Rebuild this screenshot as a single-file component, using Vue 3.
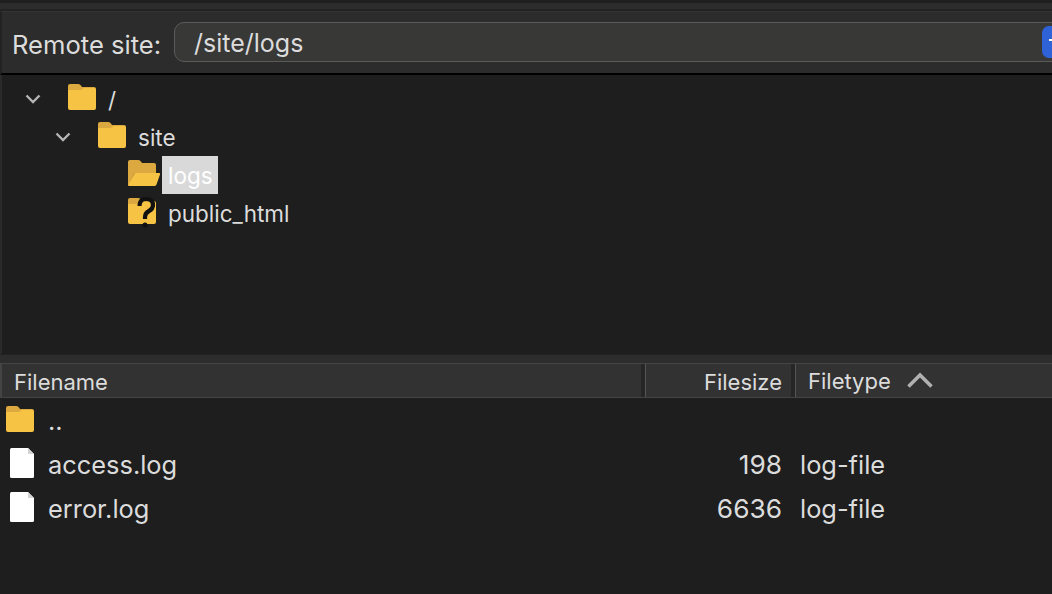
<template>
  <div class="window">
    <div class="top-strip"></div>
    <div class="site-bar">
      <label class="site-label">Remote site:</label>
      <div class="site-input">/site/logs</div>
      <div class="site-btn"><span class="btn-mark"></span></div>
    </div>
    <div class="tree">
      <div
        v-for="node in nodes"
        :key="node.name"
        class="tree-row"
        :class="'level-' + node.level"
      >
        <span class="twisty">
          <svg v-if="node.open" width="16" height="10" viewBox="0 0 16 10">
            <path d="M1.500 1.500 8 8l6.500-6.500" fill="none" stroke="#b4b4b4" stroke-width="2.400" />
          </svg>
        </span>
        <span class="tree-icon">
          <svg v-if="node.icon === 'opened'" width="32" height="26" viewBox="0 0 32 26">
            <path d="M0 2q0-2 2-2h8q1.500 0 2.500 1l1.500 2h12q2 0 2 2v8H7L0 26z" fill="#dba93f" />
            <path d="M7 13h24.500q1 0 .5 1.500l-3.500 10q-.5 1.500-2.500 1.500H1.500q-1.500 0-1.500-1z" fill="#f6c344" />
          </svg>
          <svg v-else class="closed" width="28" height="26" viewBox="0 0 28 26">
            <path d="M0 2q0-2 2-2h8q1.500 0 2.500 1l1.500 2h12q2 0 2 2v6H0z" fill="#dba93f" />
            <path d="M0 7q0-1 1-1h11q1.500 0 2.500-1l1-1H26q2 0 2 2v18q0 2-2 2H2q-2 0-2-2z" fill="#f6c344" />
            <g v-if="node.icon === 'unknown'">
              <path d="M11.500 8q0-7 6.500-7 7 0 7 6 0 4-4 6-4 2-4 6v2" fill="none" stroke="#111" stroke-width="4.200" />
              <circle cx="17" cy="27" r="2.500" fill="#111" />
            </g>
          </svg>
        </span>
        <span class="tree-label" :class="{ selected: node.selected }">{{ node.name }}</span>
      </div>
    </div>
    <div class="sash"></div>
    <div class="list-head">
      <div class="col-name">Filename</div>
      <div class="col-size">Filesize</div>
      <div class="col-type">
        Filetype
        <svg width="26" height="16" viewBox="0 0 26 16">
          <path d="M1.500 14.500 13 3l11.500 11.500" fill="none" stroke="#b0b0b0" stroke-width="3.600" />
        </svg>
      </div>
    </div>
    <div class="list">
      <div v-for="file in files" :key="file.name" class="file-row">
        <span class="file-icon">
          <svg v-if="file.dir" width="28" height="26" viewBox="0 0 28 26">
            <path d="M0 2q0-2 2-2h8q1.500 0 2.500 1l1.500 2h12q2 0 2 2v6H0z" fill="#dba93f" />
            <path d="M0 7q0-1 1-1h11q1.500 0 2.500-1l1-1H26q2 0 2 2v18q0 2-2 2H2q-2 0-2-2z" fill="#f6c344" />
          </svg>
          <svg v-else class="doc" width="24" height="30" viewBox="0 0 24 30">
            <path d="M1.500 0H18l6 6v22.500q0 1.500-1.500 1.500h-21Q0 30 0 28.500v-27Q0 0 1.500 0z" fill="#fff" />
            <path d="M18 0l6 6h-6z" fill="#d4d4d4" />
          </svg>
        </span>
        <span class="file-name">{{ file.name }}</span>
        <span class="file-size">{{ file.size }}</span>
        <span class="file-type">{{ file.type }}</span>
      </div>
    </div>
  </div>
</template>

<script setup>
const nodes = [
  { name: '/', level: 0, open: true, icon: 'folder' },
  { name: 'site', level: 1, open: true, icon: 'folder' },
  { name: 'logs', level: 2, icon: 'opened', selected: true },
  { name: 'public_html', level: 2, icon: 'unknown' }
]

const files = [
  { name: '..', dir: true, size: '', type: '' },
  { name: 'access.log', size: '198', type: 'log-file' },
  { name: 'error.log', size: '6636', type: 'log-file' }
]
</script>

<style>
html,
body {
  margin: 0;
  background: #1e1e1e;
  overflow: hidden;
}
</style>

<style scoped>
.window {
  width: 1052px;
  height: 594px;
  overflow: hidden;
  background: #1e1e1e;
  color: #dcdcdc;
  font-family: Inter, "Liberation Sans", sans-serif;
  font-size: 25.400px;
}

.top-strip {
  height: 11px;
  box-sizing: border-box;
  background: #2c2c2c;
  border-top: 3px solid #1f1f1f;
  border-bottom: 2px solid #222;
}

.site-bar {
  height: 64px;
  box-sizing: border-box;
  display: flex;
  align-items: center;
  padding-left: 12px;
  background: #2c2c2c;
  border-top: 1px solid #333;
  border-bottom: 2px solid #000;
  border-left: 2px solid #222;
}

.site-label {
  width: 162px;
  flex: none;
  white-space: nowrap;
  font-size: 25.600px;
  margin-left: -2px;
  padding-top: 3px;
}

.site-input {
  flex: none;
  width: 900px;
  height: 40px;
  margin-top: -1px;
  box-sizing: border-box;
  border: 1px solid #5a5a58;
  border-radius: 10px;
  background: #383836;
  padding-left: 19px;
  line-height: 40px;
  font-size: 25px;
}

.site-btn {
  flex: none;
  width: 40px;
  height: 32px;
  margin-left: -32px;
  margin-top: -2px;
  border-radius: 7px;
  background: #2f62d6;
}

.btn-mark {
  display: block;
  width: 3px;
  height: 2px;
  margin: 13px 0 0 7px;
  background: #fff;
}

.tree {
  height: 279px;
  box-sizing: border-box;
  padding-top: 5px;
  border-left: 2px solid #2a2a2a;
}

.tree-row {
  height: 38px;
  display: flex;
  align-items: center;
  font-size: 22.500px;
}

.level-0 { padding-left: 23px; }
.level-1 { padding-left: 53px; }
.level-2 { padding-left: 83px; }

.twisty {
  width: 43px;
  flex: none;
  display: flex;
}

.tree-icon {
  width: 28px;
  height: 26px;
  flex: none;
  margin-right: 12px;
  margin-top: -4px;
}

.tree-icon svg {
  display: block;
  overflow: visible;
}

.tree-label {
  padding: 2px 5px 0 6px;
  height: 36px;
  line-height: 36px;
  margin-left: -6px;
}

.tree-label.selected {
  background: #d9d9d9;
  color: #fff;
}

.sash {
  height: 9px;
  background: #2d2d2d;
  border-top: 1px solid #222;
  box-sizing: border-box;
}

.list-head {
  height: 35px;
  box-sizing: border-box;
  display: flex;
  background: #323232;
  border-top: 1px solid #444;
  border-bottom: 1px solid #444;
  border-left: 2px solid #444;
  font-size: 22px;
  line-height: 33px;
}

.col-name {
  width: 643px;
  box-sizing: border-box;
  padding: 2px 0 0 12px;
  flex: none;
  border-right: 4px solid #262626;
}

.col-size {
  width: 150px;
  box-sizing: border-box;
  flex: none;
  padding: 2px 9px 0 0;
  text-align: right;
  border-left: 1px solid #555;
  border-right: 4px solid #262626;
}

.col-type {
  flex: 1;
  padding: 2px 0 0 12px;
  display: flex;
  align-items: center;
  gap: 16px;
  border-left: 1px solid #555;
}

.col-type svg {
  margin-top: -3px;
}

.file-row {
  height: 44px;
  display: flex;
  align-items: center;
}

.file-icon {
  width: 48px;
  flex: none;
  padding-left: 6px;
  box-sizing: border-box;
  display: flex;
  margin-top: -2px;
}

.doc {
  margin-left: 4px;
}

.file-name {
  width: 400px;
  flex: none;
}

.file-size {
  width: 334px;
  flex: none;
  text-align: right;
  font-size: 26.300px;
}

.file-type {
  margin-left: 18px;
}
</style>
